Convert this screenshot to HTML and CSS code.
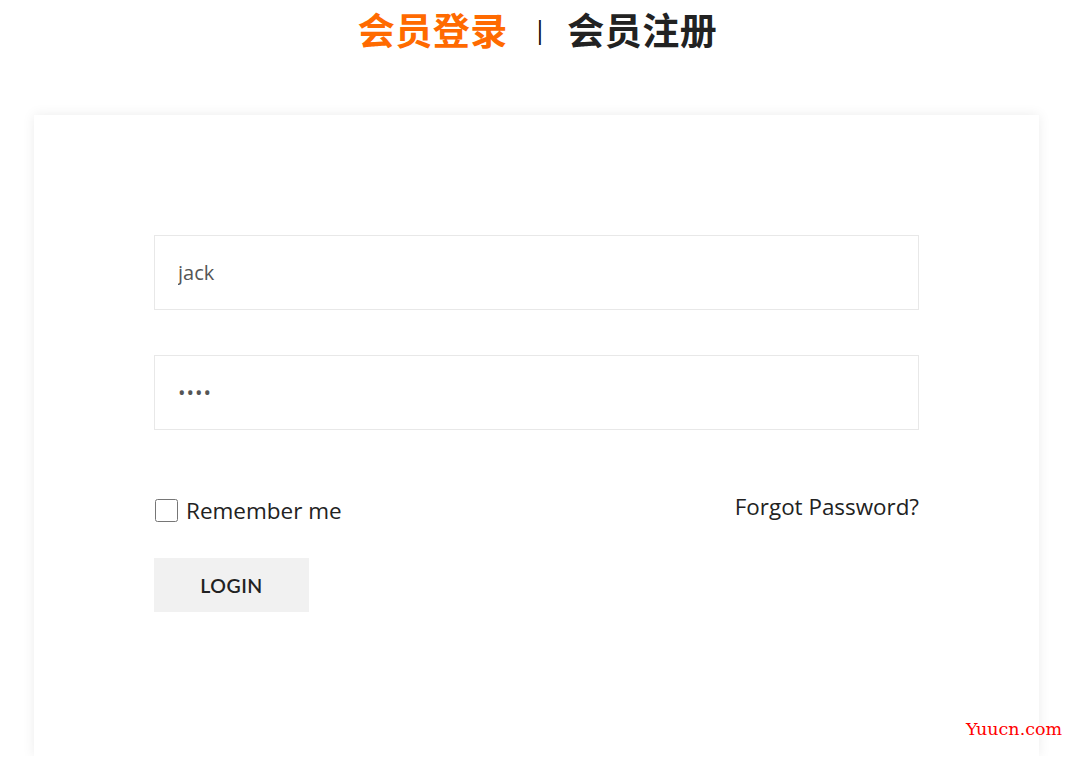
FILE: index.html
```html
<!DOCTYPE html>
<html lang="zh-CN">
<head>
    <meta charset="UTF-8">
    <meta name="viewport" content="width=device-width, initial-scale=1.0">
    <title>会员登录</title>
    <link rel="stylesheet" href="styles.css">
</head>
<body>
    <div class="tabs">
        <a href="#" class="tab active">会员登录</a>
        <span class="sep">|</span>
        <a href="#" class="tab">会员注册</a>
    </div>

    <div class="card">
        <form class="login-form">
            <input type="text" class="field" value="jack">
            <input type="password" class="field" value="1234">

            <div class="options">
                <label class="remember">
                    <input type="checkbox">
                    <span>Remember me</span>
                </label>
                <a href="#" class="forgot">Forgot Password?</a>
            </div>

            <button type="submit" class="btn-login">LOGIN</button>
        </form>
    </div>

    <div class="watermark">Yuucn.com</div>
</body>
</html>
```

FILE: styles.css
```css
body {
    margin: 0;
    background-color: #fff;
    font-family: 'Open Sans', 'Noto Sans CJK SC', sans-serif;
    color: #222;
}
.tabs {
    display: flex;
    justify-content: center;
    align-items: center;
    height: 58px;
    font-family: 'Noto Sans CJK SC', sans-serif;
}
.tab {
    font-size: 37px;
    font-weight: 700;
    color: #222;
    text-decoration: none;
    letter-spacing: 0.5px;
}
.tab.active {
    color: #ff6a00;
}
.sep {
    font-family: 'Open Sans', sans-serif;
    font-size: 26px;
    color: #111;
    margin: 0 20px 0 25px;
}
.card {
    width: 1005px;
    box-sizing: border-box;
    margin: 57px 0 0 34px;
    padding: 120px 120px 144px;
    background-color: #fff;
    box-shadow: 0 0 12px rgba(0, 0, 0, 0.08);
}
.login-form {
    display: flex;
    flex-direction: column;
}
.field {
    height: 75px;
    box-sizing: border-box;
    padding: 0 23px;
    margin-bottom: 45px;
    border: 1px solid #e8e8e8;
    font-family: 'Open Sans', sans-serif;
    font-size: 20px;
    color: #555;
    outline: none;
}
.field[type="password"] {
    margin-bottom: 64px;
    letter-spacing: 1px;
}
.options {
    display: flex;
    justify-content: space-between;
    align-items: center;
    height: 32px;
    margin-bottom: 32px;
}
.remember {
    display: flex;
    align-items: center;
    font-size: 22.5px;
    color: #222;
    margin-top: 1px;
}
.remember input {
    width: 23px;
    height: 23px;
    margin: 0 8px 0 1px;
}
.forgot {
    font-size: 22.4px;
    color: #222;
    text-decoration: none;
    margin-top: -7px;
}
.btn-login {
    width: 155px;
    height: 54px;
    border: none;
    background-color: #f1f1f1;
    font-family: 'Lato', sans-serif;
    font-size: 19.5px;
    font-weight: 600;
    color: #222;
    letter-spacing: 0.5px;
    cursor: pointer;
}
.watermark {
    position: absolute;
    left: 966px;
    top: 719px;
    font-family: 'DejaVu Serif', serif;
    font-size: 17.5px;
    color: #f00;
}
```
